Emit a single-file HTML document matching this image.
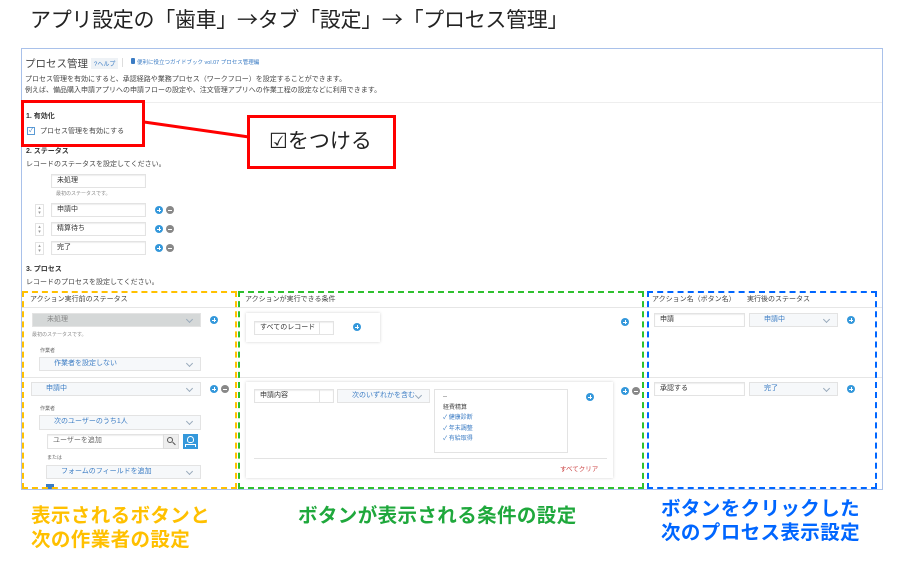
<!DOCTYPE html>
<html><head><meta charset="utf-8"><style>
*{margin:0;padding:0;box-sizing:border-box}
body{width:904px;height:562px;background:#fff;position:relative;overflow:hidden;font-family:"Liberation Sans","Noto Sans CJK JP",sans-serif;color:#333}
.a{position:absolute;white-space:nowrap}
.s{font-size:7px;color:#444}
.inp{position:absolute;border:1px solid #e3e3e3;background:#fff;font-size:7px;padding-left:5px;line-height:12px;color:#333;box-shadow:inset 0 1px 1px #eee}
.sel{position:absolute;border:1px solid #e3e3e3;background:#f6f8fa;font-size:7px;color:#3b7cc4;line-height:12px;padding-left:14px}
.sel:after{content:"";position:absolute;right:8px;top:3px;width:4px;height:4px;border-right:1px solid #9ab;border-bottom:1px solid #9ab;transform:rotate(45deg)}
.p,.m{position:absolute;width:8px;height:8px;border-radius:50%;background:#3498db}
.p:before,.p:after,.m:before{content:"";position:absolute;background:#fff;left:2px;top:3.5px;width:4px;height:1px}
.p:after{left:3.5px;top:2px;width:1px;height:4px}
.m{background:#888}
.card{position:absolute;background:#fff;box-shadow:0 0 3px rgba(0,0,0,.18)}
.lbl{position:absolute;font-weight:bold;font-size:19.5px;white-space:nowrap;letter-spacing:.4px}
.sp{position:absolute;border:1px solid #e3e3e3;width:9px;height:13px;font-size:5px;line-height:5px;text-align:center;color:#999;padding-top:1px}
</style></head><body>
<div class="a" style="left:30px;top:4px;font-size:21px;color:#222;font-family:'Noto Sans CJK JP',sans-serif;letter-spacing:-0.3px">アプリ設定の「歯車」→タブ「設定」→「プロセス管理」</div>

<div class="a" style="left:21px;top:48px;width:862px;height:442px;border:1px solid #a9c1ea"></div>
<div class="a" style="left:25px;top:56px;font-size:10.5px;color:#444">プロセス管理</div>
<div class="a" style="left:91px;top:58px;font-size:6px;color:#3b7cc4;background:#eef2f6;padding:1px 3px">?ヘルプ</div>
<div class="a" style="left:122px;top:58px;width:1px;height:9px;background:#ddd"></div>
<div class="a" style="left:131px;top:58px;width:4px;height:6px;background:#3b7cc4;border-radius:1px"></div>
<div class="a" style="left:137px;top:58px;font-size:5.5px;color:#3b7cc4">便利に役立つガイドブック vol.07 プロセス管理編</div>
<div class="a s" style="left:25px;top:74px">プロセス管理を有効にすると、承認経路や業務プロセス（ワークフロー）を設定することができます。</div>
<div class="a s" style="left:25px;top:85px">例えば、備品購入申請アプリへの申請フローの設定や、注文管理アプリへの作業工程の設定などに利用できます。</div>
<div class="a" style="left:22px;top:102px;width:860px;height:1px;background:#eee"></div>

<div class="a" style="left:26px;top:111px;font-size:7px;font-weight:bold">1. 有効化</div>
<div class="a" style="left:27px;top:127px;width:8px;height:8px;border:1px solid #5b9bd5;font-size:6px;color:#3b7cc4;line-height:6px;text-align:center">✓</div>
<div class="a s" style="left:40px;top:126px">プロセス管理を有効にする</div>
<div class="a" style="left:26px;top:146px;font-size:7px;font-weight:bold">2. ステータス</div>
<div class="a s" style="left:26px;top:159px">レコードのステータスを設定してください。</div>
<div class="inp" style="left:51px;top:174px;width:95px;height:14px">未処理</div>
<div class="a" style="left:56px;top:190px;font-size:5px;color:#888">最初のステータスです。</div>
<div class="sp" style="left:35px;top:204px">▴<br>▾</div>
<div class="inp" style="left:51px;top:203px;width:95px;height:14px">申請中</div>
<div class="p" style="left:155px;top:206px"></div><div class="m" style="left:166px;top:206px"></div>
<div class="sp" style="left:35px;top:223px">▴<br>▾</div>
<div class="inp" style="left:51px;top:222px;width:95px;height:14px">精算待ち</div>
<div class="p" style="left:155px;top:225px"></div><div class="m" style="left:166px;top:225px"></div>
<div class="sp" style="left:35px;top:242px">▴<br>▾</div>
<div class="inp" style="left:51px;top:241px;width:95px;height:14px">完了</div>
<div class="p" style="left:155px;top:244px"></div><div class="m" style="left:166px;top:244px"></div>
<div class="a" style="left:26px;top:264px;font-size:7px;font-weight:bold">3. プロセス</div>
<div class="a s" style="left:26px;top:277px">レコードのプロセスを設定してください。</div>

<div class="a" style="left:22px;top:307px;width:860px;height:1px;background:#e6e6e6"></div>
<div class="a" style="left:22px;top:377px;width:860px;height:1px;background:#e6e6e6"></div>
<div class="a s" style="left:30px;top:294px">アクション実行前のステータス</div>
<div class="a s" style="left:245px;top:294px">アクションが実行できる条件</div>
<div class="a s" style="left:652px;top:294px">アクション名（ボタン名）</div>
<div class="a s" style="left:747px;top:294px">実行後のステータス</div>

<div class="sel" style="left:32px;top:313px;width:169px;height:14px;background:#d5d8d8;color:#888">未処理</div>
<div class="p" style="left:210px;top:316px"></div>
<div class="a" style="left:32px;top:331px;font-size:5px;color:#888">最初のステータスです。</div>
<div class="a" style="left:40px;top:347px;font-size:5px;color:#666">作業者</div>
<div class="sel" style="left:39px;top:357px;width:162px;height:14px">作業者を設定しない</div>
<div class="sel" style="left:31px;top:382px;width:170px;height:14px">申請中</div>
<div class="p" style="left:210px;top:385px"></div><div class="m" style="left:221px;top:385px"></div>
<div class="a" style="left:40px;top:405px;font-size:5px;color:#666">作業者</div>
<div class="sel" style="left:39px;top:415px;width:162px;height:15px">次のユーザーのうち1人</div>
<div class="inp" style="left:47px;top:434px;width:117px;height:15px;color:#666">ユーザーを追加</div>
<div class="a" style="left:163px;top:434px;width:16px;height:15px;background:#eee;border:1px solid #ddd"></div>
<div class="a" style="left:167px;top:437px;width:6px;height:6px;border:1px solid #555;border-radius:50%"></div>
<div class="a" style="left:172px;top:443px;width:4px;height:1px;background:#555;transform:rotate(45deg)"></div>
<div class="a" style="left:183px;top:434px;width:15px;height:15px;background:#3498db"></div>
<div class="a" style="left:187px;top:436px;width:7px;height:7px;border:1px solid #fff;border-radius:50% 50% 40% 40%"></div>
<div class="a" style="left:185px;top:444px;width:11px;height:3px;border:1px solid #fff;border-bottom:0"></div>
<div class="a" style="left:47px;top:454px;font-size:5px;color:#666">または</div>
<div class="sel" style="left:46px;top:465px;width:155px;height:14px">フォームのフィールドを追加</div>
<div class="a" style="left:46px;top:484px;width:8px;height:5px;background:#3b7cc4"></div>

<div class="card" style="left:246px;top:313px;width:134px;height:29px"></div>
<div class="inp" style="left:254px;top:321px;width:80px;height:14px">すべてのレコード</div>
<div class="a" style="left:319px;top:321px;width:1px;height:14px;background:#e3e3e3"></div>
<div class="p" style="left:353px;top:323px"></div>
<div class="p" style="left:621px;top:318px"></div>
<div class="card" style="left:246px;top:382px;width:367px;height:96px"></div>
<div class="inp" style="left:254px;top:389px;width:80px;height:14px">申請内容</div>
<div class="a" style="left:319px;top:389px;width:1px;height:14px;background:#e3e3e3"></div>
<div class="sel" style="left:337px;top:389px;width:93px;height:14px">次のいずれかを含む</div>
<div class="a" style="left:434px;top:389px;width:134px;height:64px;border:1px solid #e3e3e3;font-size:6px;line-height:10.5px;padding:2px 0 0 8px;color:#444">--<br>経費精算<br><span style="color:#3b7cc4">✓ 健康診断<br>✓ 年末調整<br>✓ 有給取得</span></div>
<div class="p" style="left:586px;top:393px"></div>
<div class="a" style="left:254px;top:458px;width:353px;height:1px;background:#e3e3e3"></div>
<div class="a" style="left:560px;top:463px;font-size:6.5px;color:#c44">すべてクリア</div>
<div class="p" style="left:621px;top:387px"></div><div class="m" style="left:632px;top:387px"></div>

<div class="inp" style="left:654px;top:313px;width:91px;height:14px">申請</div>
<div class="sel" style="left:749px;top:313px;width:89px;height:14px">申請中</div>
<div class="p" style="left:847px;top:316px"></div>
<div class="inp" style="left:654px;top:382px;width:91px;height:14px">承認する</div>
<div class="sel" style="left:749px;top:382px;width:89px;height:14px">完了</div>
<div class="p" style="left:847px;top:385px"></div>

<div class="a" style="left:22px;top:291px;width:215px;height:198px;border:2px dashed #ffc000"></div>
<div class="a" style="left:238px;top:291px;width:406px;height:198px;border:2px dashed #2ec12e"></div>
<div class="a" style="left:647px;top:291px;width:230px;height:198px;border:2px dashed #0066ff"></div>

<div class="a" style="left:21px;top:100px;width:124px;height:47px;border:3px solid #f00"></div>
<svg class="a" style="left:0;top:0" width="904" height="562"><line x1="144" y1="122" x2="249" y2="137" stroke="#f00" stroke-width="3"/></svg>
<div class="a" style="left:247px;top:115px;width:149px;height:54px;border:3px solid #f00;background:#fff;font-size:21px;line-height:47px;padding-left:19px;color:#222">☑をつける</div>

<div class="lbl" style="left:31px;top:499px;color:#ffc000">表示されるボタンと</div>
<div class="lbl" style="left:31px;top:523px;color:#ffc000">次の作業者の設定</div>
<div class="lbl" style="left:298px;top:499px;color:#1fa83c">ボタンが表示される条件の設定</div>
<div class="lbl" style="left:661px;top:492px;color:#0066ff">ボタンをクリックした</div>
<div class="lbl" style="left:661px;top:516px;color:#0066ff">次のプロセス表示設定</div>
</body></html>
